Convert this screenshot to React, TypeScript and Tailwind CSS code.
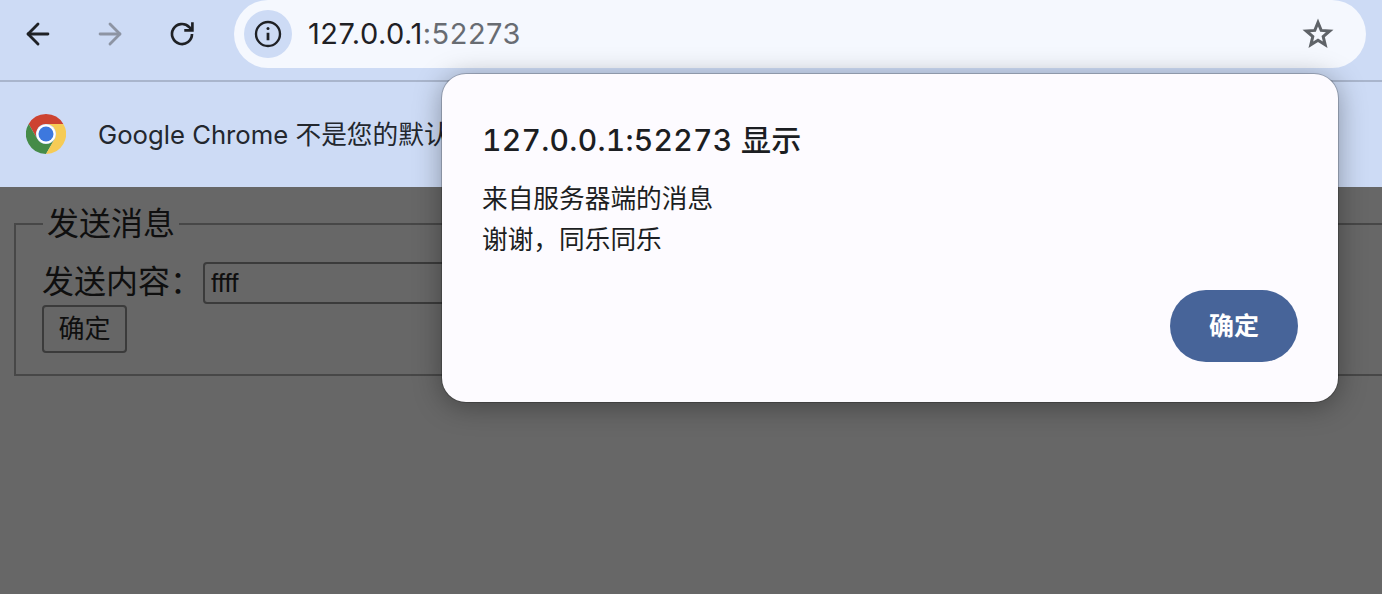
import { ArrowLeft, ArrowRight } from 'lucide-react'

const uiFont = "font-['Inter','Noto_Sans_CJK_SC',sans-serif]"

function ChromeLogo() {
  return (
    <svg width="40" height="40" viewBox="0 0 48 48">
      <path d="M24 0A24 24 0 0 1 44.8 12H24A12 12 0 0 0 13.6 30L3.2 12A24 24 0 0 1 24 0z" fill="#cd4331" />
      <path d="M3.2 12 13.6 30A12 12 0 0 0 34.4 30L24 48A24 24 0 0 1 3.2 12z" fill="#458b48" />
      <path d="M44.8 12A24 24 0 0 1 24 48L34.4 30A12 12 0 0 0 24 12H44.8z" fill="#f6cb55" />
      <circle cx="24" cy="24" r="11.5" fill="#fff" />
      <circle cx="24" cy="24" r="9" fill="#3d78de" />
    </svg>
  )
}

export default function App() {
  return (
    <div className={`relative h-[594px] w-[1382px] overflow-hidden bg-[#676767] ${uiFont}`}>
      <div className="flex h-[82px] items-start border-b-2 border-[#a9b5cc] bg-[#cddbf5]">
        <div className="flex h-[68px] w-[234px] items-center pl-[21px] text-[#1f2125]">
          <ArrowLeft size={34} strokeWidth={2} />
          <ArrowRight size={34} strokeWidth={2} className="ml-[38px] text-[#8d94a3]" />
          <svg width="32" height="32" viewBox="0 0 24 24" fill="none" stroke="currentColor" strokeWidth="2" className="ml-[39px]">
            <path d="M19.5 12a7.5 7.5 0 1 1-2.2-5.3L19.5 9" />
            <path d="M19.8 3.2V9.3h-6.1" />
          </svg>
        </div>
        <div className="flex h-[68px] w-[1132px] items-center rounded-[34px] bg-[#f5f8fe] pl-[10px] pr-[32px]">
          <div className="flex h-[48px] w-[48px] items-center justify-center rounded-full bg-[#cddbf5] text-[#1f2125]">
            <svg width="30" height="30" viewBox="0 0 24 24" fill="none" stroke="currentColor" strokeWidth="1.9">
              <circle cx="12" cy="12" r="9.6" />
              <path d="M12 11v6" strokeWidth="2.2" />
              <circle cx="12" cy="7.6" r="1.2" fill="currentColor" stroke="none" />
            </svg>
          </div>
          <span className="ml-[16px] text-[29px] tracking-[0.5px] text-[#1f2125]">
            127.0.0.1<span className="text-[#686c72]">:52273</span>
          </span>
          <svg width="32" height="32" viewBox="0 0 32 32" fill="none" stroke="#5f6368" strokeWidth="3" strokeLinejoin="miter" className="ml-auto">
            <path d="M16 4.5 19.2 12.4 27.7 13 21.2 18.5 23.2 26.8 16 22.3 8.8 26.8 10.8 18.5 4.3 13 12.8 12.4z" />
          </svg>
        </div>
      </div>

      <div className="flex h-[105px] items-center bg-[#cddbf5] pb-[2px] pl-[26px]">
        <ChromeLogo />
        <span className="ml-[32px] mt-[3px] whitespace-nowrap text-[25.7px] text-[#23272e]">Google Chrome 不是您的默认</span>
      </div>

      <fieldset className="ml-[14px] mt-[17px] w-[1400px] border-2 border-[#474747] pb-[21px] pl-[26px] pt-[17px] font-['Liberation_Sans','Noto_Sans_CJK_SC',sans-serif] text-[#0f0f0f]">
        <legend className="ml-[1px] px-[4px] text-[32px] leading-[40px]">发送消息</legend>
        <div className="flex h-[43px] items-center">
          <span className="mb-[2px] text-[32px]">发送内容：</span>
          <div className="ml-[1px] flex h-[42px] w-[600px] items-center rounded-[4px] border-2 border-[#3b3b3b] pl-[6px] pt-[1px] text-[26px]">ffff</div>
        </div>
        <button className="mt-[1px] block h-[48px] w-[85px] rounded-[4px] border-2 border-[#3b3b3b] bg-[#666666] text-[26px]">确定</button>
      </fieldset>

      <div className="absolute left-[442px] top-[74px] flex h-[328px] w-[896px] flex-col rounded-[24px] bg-[#fdfbff] px-[40px] pt-[46px] shadow-[0_0_0_1px_rgba(0,0,0,0.2),0_4px_28px_rgba(0,0,0,0.35)]">
        <div className="text-[30px] font-medium tabular-nums leading-[40px] tracking-[0.3px] text-[#1c1e22]">127.0.0.1:52273 显示</div>
        <div className="mt-[18px] text-[25.7px] leading-[41px] text-[#1c1e22]">
          <div>来自服务器端的消息</div>
          <div>谢谢，同乐同乐</div>
        </div>
        <button className="absolute bottom-[40px] right-[40px] h-[72px] w-[128px] rounded-full bg-[#476499] pt-[2px] text-[25px] font-bold text-white">确定</button>
      </div>
    </div>
  )
}
